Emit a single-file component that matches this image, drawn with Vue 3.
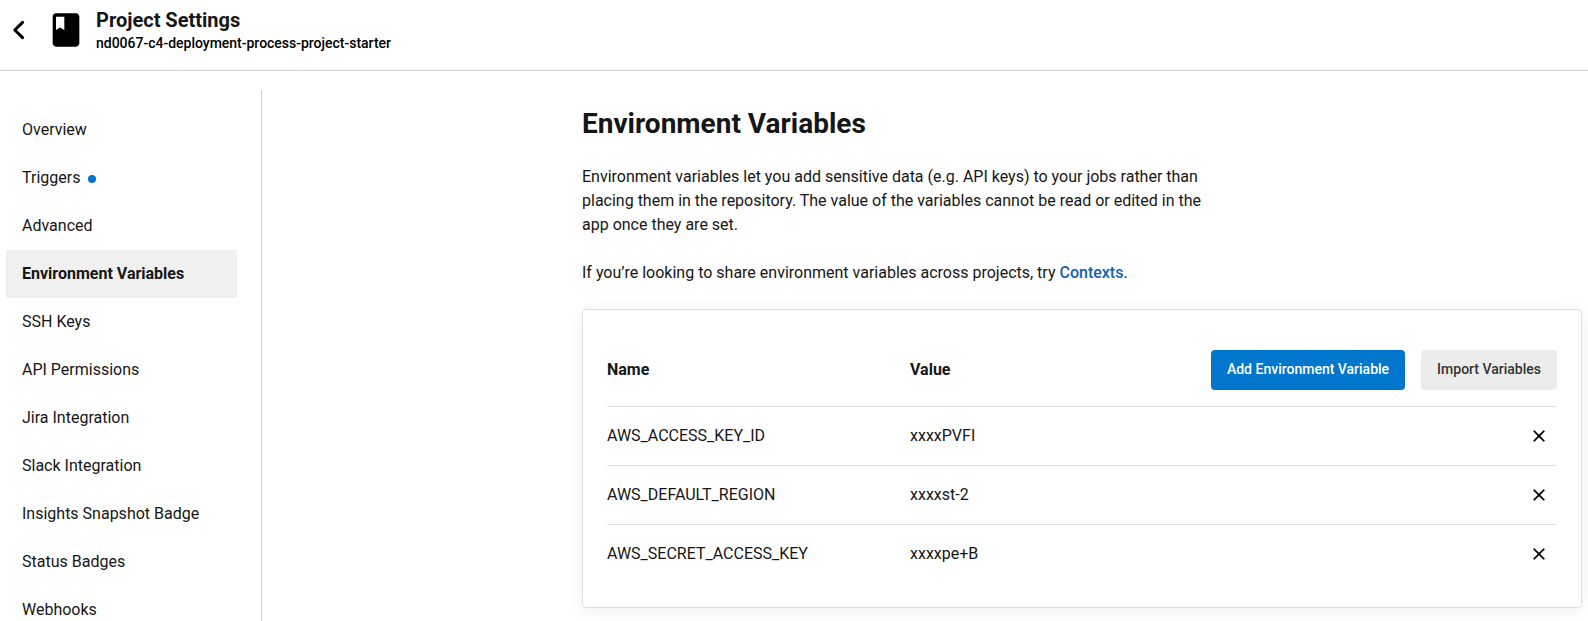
<script setup>
const nav = [
  { label: 'Overview' },
  { label: 'Triggers', dot: true },
  { label: 'Advanced' },
  { label: 'Environment Variables', active: true },
  { label: 'SSH Keys' },
  { label: 'API Permissions' },
  { label: 'Jira Integration' },
  { label: 'Slack Integration' },
  { label: 'Insights Snapshot Badge' },
  { label: 'Status Badges' },
  { label: 'Webhooks' },
]
const variables = [
  { name: 'AWS_ACCESS_KEY_ID', value: 'xxxxPVFI' },
  { name: 'AWS_DEFAULT_REGION', value: 'xxxxst-2' },
  { name: 'AWS_SECRET_ACCESS_KEY', value: 'xxxxpe+B' },
]
</script>

<template>
  <div class="page">
    <header class="header">
      <svg class="back" viewBox="0 0 24 24"><path d="M14.4 6.9 9.2 12l5.2 5.1" /></svg>
      <svg class="book" viewBox="0 0 24 24"><path d="M18 2H6c-1.1 0-2 .9-2 2v16c0 1.1.9 2 2 2h12c1.1 0 2-.9 2-2V4c0-1.1-.9-2-2-2zM6 4h5v8l-2.5-1.5L6 12V4z" /></svg>
      <div class="titles">
        <div class="title">Project Settings</div>
        <div class="subtitle">nd0067-c4-deployment-process-project-starter</div>
      </div>
    </header>
    <div class="body">
      <aside class="sidebar">
        <nav class="nav">
          <a v-for="item in nav" :key="item.label" class="nav-item" :class="{ active: item.active }">
            {{ item.label }}<span v-if="item.dot" class="dot"></span>
          </a>
        </nav>
      </aside>
      <main class="main">
        <h1 class="heading">Environment Variables</h1>
        <p class="text">Environment variables let you add sensitive data (e.g. API keys) to your jobs rather than placing them in the repository. The value of the variables cannot be read or edited in the app once they are set.</p>
        <p class="text">If you’re looking to share environment variables across projects, try <a class="link">Contexts</a>.</p>
        <section class="card">
          <div class="row head">
            <div class="name">Name</div>
            <div class="value">Value</div>
            <div class="actions">
              <button class="btn primary">Add Environment Variable</button>
              <button class="btn">Import Variables</button>
            </div>
          </div>
          <div v-for="v in variables" :key="v.name" class="row">
            <div class="name">{{ v.name }}</div>
            <div class="value">{{ v.value }}</div>
            <svg class="close" viewBox="0 0 24 24"><path d="M19 6.41 17.59 5 12 10.59 6.41 5 5 6.41 10.59 12 5 17.59 6.41 19 12 13.41 17.59 19 19 17.59 13.41 12z" /></svg>
          </div>
        </section>
      </main>
    </div>
  </div>
</template>

<style>
body { background: #fff; overflow: hidden; }
</style>

<style scoped>
.page {
  width: 1588px;
  height: 621px;
  overflow: hidden;
  display: flex;
  flex-direction: column;
  font-family: Roboto, "Liberation Sans", sans-serif;
  font-size: 16px;
  line-height: 24px;
  color: #161616;
}
.header {
  flex: none;
  box-sizing: border-box;
  height: 71px;
  border-bottom: 1px solid #d0d0d0;
  display: flex;
  align-items: flex-start;
}
.back {
  width: 36px;
  height: 36px;
  margin: 12px 0 0 1px;
  fill: none;
  stroke: #000;
  stroke-width: 2;
  stroke-linecap: round;
  stroke-linejoin: round;
}
.book { width: 40px; height: 40px; margin: 10px 0 0 9px; fill: #000; }
.titles { margin: 8px 0 0 10px; }
.title { font-size: 20px; font-weight: 700; line-height: 24px; }
.subtitle { font-size: 14px; font-weight: 500; line-height: 20px; margin-top: 1px; letter-spacing: -0.01px; color: #000; }
.body { flex: 1; min-height: 0; display: flex; }
.sidebar {
  flex: none;
  box-sizing: border-box;
  width: 262px;
  margin-top: 19px;
  padding: 16px 24px 0 6px;
  border-right: 1px solid #d0d0d0;
}
.nav { display: flex; flex-direction: column; }
.nav-item { flex: none; height: 48px; padding-left: 16px; display: flex; align-items: center; }
.active { background: #f0f0f0; font-weight: 700; }
.dot { width: 8px; height: 8px; border-radius: 50%; background: #07c; margin: 2px 0 0 8px; }
.main { margin-left: 320px; width: 1000px; padding-top: 33px; }
.heading { margin: 0 0 21px; font-size: 28px; line-height: 40px; font-weight: 700; }
.text { margin: 0 0 24px; width: 640px; }
.link { color: #1163b2; font-weight: 500; }
.card {
  box-sizing: border-box;
  border: 1px solid #e0e0e0;
  border-radius: 4px;
  padding: 24px;
  box-shadow: 0 2px 16px rgba(0, 0, 0, 0.07);
}
.row { display: flex; align-items: center; height: 58px; }
.row + .row { border-top: 1px solid #e0e0e0; }
.head { height: 72px; font-weight: 700; }
.name { width: 303px; }
.value { flex: 1; }
.actions { display: flex; gap: 16px; }
.btn {
  height: 40px;
  padding: 0 16px 2px;
  border: 0;
  border-radius: 4px;
  font: 500 14px/20px Roboto, "Liberation Sans", sans-serif;
  color: #333;
  background: #ececec;
}
.primary { background: #07c; color: #fff; }
.close { width: 20px; height: 20px; margin-right: 8px; fill: #000; stroke: #000; stroke-width: 0.2; }
</style>
